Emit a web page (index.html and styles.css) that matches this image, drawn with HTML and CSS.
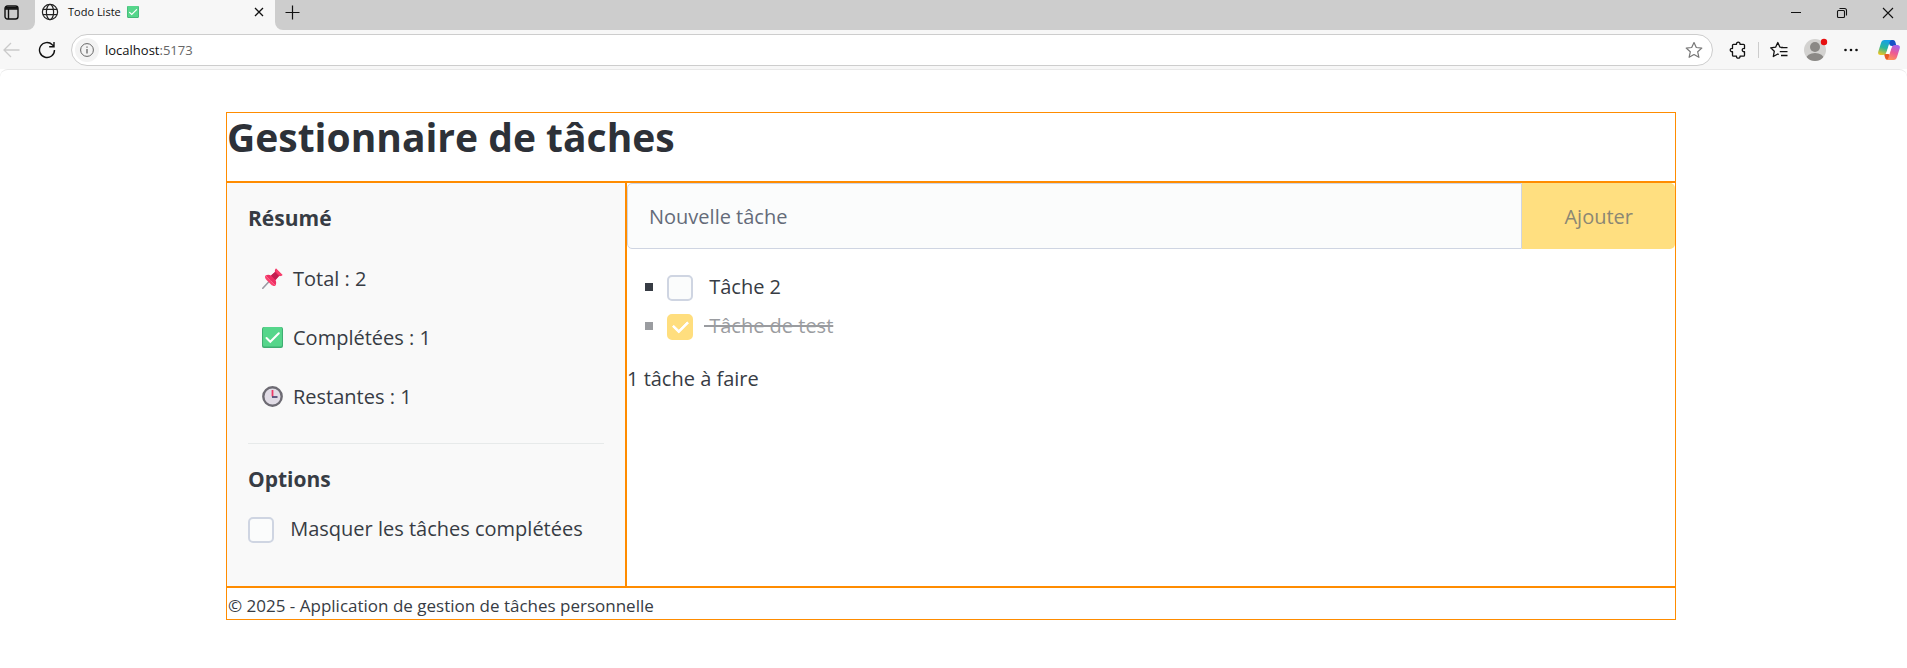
FILE: index.html
```html
<!DOCTYPE html>
<html lang="fr">
<head>
<meta charset="utf-8">
<meta name="viewport" content="width=device-width, initial-scale=1">
<title>Todo Liste ✅</title>
<link rel="stylesheet" href="styles.css">
</head>
<body>
<svg class="defs" width="0" height="0" aria-hidden="true">
  <defs>
    <symbol id="check-emoji" viewBox="0 0 21 21">
      <rect x="0" y="0" width="21" height="21" rx="2" fill="#3fae72"/>
      <rect x="1" y="0" width="19" height="19.500" rx="1.500" fill="#56d68b"/>
      <path d="M4.500 11l3.800 3.800L16.800 6.300" fill="none" stroke="#fff" stroke-width="2" stroke-linecap="round"/>
    </symbol>
  </defs>
</svg>

<header class="browser">
  <div class="tabs">
    <div class="strip strip-start">
      <button class="icon-btn tab-actions" aria-label="Menu des onglets">
        <svg width="15" height="15" viewBox="0 0 15 15" fill="none" stroke="#111" stroke-width="1.400"><rect x="1" y="1" width="13" height="13" rx="2.500"/><path d="M1 4h13M4.500 4v10"/><path d="M1.500 2.800h12" stroke-width="2"/></svg>
      </button>
    </div>
    <div class="tab">
      <svg width="18" height="18" viewBox="0 0 18 18" fill="none" stroke="#222" stroke-width="1.200"><circle cx="9" cy="9" r="7.600"/><ellipse cx="9" cy="9" rx="3.600" ry="7.600"/><path d="M2 6.300h14M2 11.700h14"/></svg>
      <span class="tab-title">Todo Liste</span>
      <svg class="tab-emoji" width="12" height="12"><use href="#check-emoji"/></svg>
      <button class="icon-btn tab-close" aria-label="Fermer l'onglet">
        <svg width="10" height="10" viewBox="0 0 10 10" stroke="#111" stroke-width="1.300"><path d="M1 1l8 8M9 1l-8 8"/></svg>
      </button>
    </div>
    <div class="strip strip-end">
      <button class="icon-btn new-tab" aria-label="Nouvel onglet">
        <svg width="15" height="15" viewBox="0 0 15 15" stroke="#111" stroke-width="1.200"><path d="M7.500 0.500v14M0.500 7.500h14"/></svg>
      </button>
      <div class="window-controls">
        <button class="icon-btn" aria-label="Réduire"><svg width="12" height="12" viewBox="0 0 12 12" stroke="#111"><path d="M1 5.500h10"/></svg></button>
        <button class="icon-btn" aria-label="Restaurer"><svg width="12" height="12" viewBox="0 0 12 12" fill="none" stroke="#111" stroke-width="1.100"><rect x="1.500" y="3.500" width="7" height="7" rx="1"/><path d="M3.500 1.500h5a2 2 0 0 1 2 2v5"/></svg></button>
        <button class="icon-btn" aria-label="Fermer"><svg width="12" height="12" viewBox="0 0 12 12" stroke="#111" stroke-width="1.100"><path d="M1 1l10 10M11 1L1 11"/></svg></button>
      </div>
    </div>
  </div>

  <div class="toolbar">
    <button class="icon-btn back" aria-label="Retour">
      <svg width="17" height="16" viewBox="0 0 17 16" fill="none" stroke="#cacaca" stroke-width="1.300"><path d="M16.500 8H1M8 1L1 8l7 7"/></svg>
    </button>
    <button class="icon-btn reload" aria-label="Actualiser">
      <svg width="18" height="18" viewBox="0 0 18 18" fill="none" stroke="#111" stroke-width="1.400"><path d="M16.500 9A7.500 7.500 0 1 1 14.300 3.700L16 5.300M16 1v4.800h-4.800"/></svg>
    </button>
    <div class="address">
      <button class="icon-btn site-info" aria-label="Informations sur le site">
        <svg width="14" height="14" viewBox="0 0 14 14" fill="none" stroke="#666"><circle cx="7" cy="7" r="6.400"/><path d="M7 6v4.500M7 3.400v1.400" stroke-width="1.300"/></svg>
      </button>
      <div class="url" role="textbox" aria-label="Adresse"><span class="host">localhost</span>:5173</div>
      <button class="icon-btn" aria-label="Ajouter aux favoris">
        <svg width="18" height="18" viewBox="0 0 18 18" fill="none" stroke="#777" stroke-width="1.200" stroke-linejoin="round"><path d="M9 1.500l2.300 5 5.500.6-4.100 3.700 1.200 5.500L9 13.500l-4.900 2.800 1.200-5.500L1.200 7.100l5.500-.6z"/></svg>
      </button>
    </div>
    <div class="tools">
      <button class="icon-btn" aria-label="Extensions">
        <svg width="18" height="18" viewBox="0 0 18 18" fill="none" stroke="#111" stroke-width="1.300" stroke-linejoin="round"><path d="M4.500 3.300h3C7 0.500 11.500 0.500 11 3.300h3.500q1 0 1 1v3.200c-3-.6-3 3.700 0 3.200v3.500q0 1-1 1H11c.5 2.600-4 2.600-3.500 0h-3q-1 0-1-1v-3.500C.5 11.200.5 7 3.500 7.500V4.300q0-1 1-1z"/></svg>
      </button>
      <span class="separator"></span>
      <button class="icon-btn" aria-label="Favoris">
        <svg width="18" height="18" viewBox="0 0 18 18" fill="none" stroke="#111" stroke-width="1.300" stroke-linejoin="round"><path d="M13 6.500l-3-.3L7.800 1.500l-2.200 4.700-4.900.6 3.600 3.400-1 5.300 4.500-2.500 1 .5M11 6.700h6.500M9.800 10.600h7.700M11 14.500h6.500"/></svg>
      </button>
      <button class="icon-btn" aria-label="Profil">
        <svg width="24" height="26" viewBox="0 0 24 26"><defs><clipPath id="avatar-clip"><circle cx="11" cy="13" r="11"/></clipPath></defs><circle cx="11" cy="13" r="11" fill="#d3d2d0"/><g clip-path="url(#avatar-clip)" fill="#8b8986"><circle cx="11" cy="10" r="5"/><ellipse cx="11" cy="22" rx="9" ry="6"/></g><circle cx="20" cy="5" r="3.200" fill="#e60f0f"/></svg>
      </button>
      <button class="icon-btn" aria-label="Plus d'options">
        <svg width="14" height="4" viewBox="0 0 14 4" fill="#111"><circle cx="1.500" cy="2" r="1.300"/><circle cx="7" cy="2" r="1.300"/><circle cx="12.500" cy="2" r="1.300"/></svg>
      </button>
      <button class="icon-btn copilot" aria-label="Copilot">
        <svg width="22" height="20" viewBox="0 0 22 20">
          <defs>
            <linearGradient id="cp-left" x1="0.500" y1="0" x2="0.200" y2="1"><stop offset="0" stop-color="#14a0e8"/><stop offset=".5" stop-color="#28b69b"/><stop offset="1" stop-color="#f5c61c"/></linearGradient>
            <linearGradient id="cp-right" x1="0.700" y1="0" x2="0.300" y2="1"><stop offset="0" stop-color="#a564ee"/><stop offset=".5" stop-color="#ed5a94"/><stop offset="1" stop-color="#ff9555"/></linearGradient>
          </defs>
          <path d="M11 0h4c1.500 0 2 1 2.500 2.500L18.500 6H14c-2 0-2.500-1-3-3z" fill="#1652c6"/>
          <path d="M5 20h5c-2 0-2.500-1-3-2.500L6 14h4c2 0 2 1 1.500 3L11 20z" fill="#e85a24"/>
          <path d="M6.500 0H14c-1.500 0-2 1-2.500 2.500L8.500 12c-.6 2-1.500 3-3.500 3H2.500C.5 15-.3 13.500.3 11.500L3 3C3.600 1 4.500 0 6.500 0z" fill="url(#cp-left)"/>
          <path d="M15.500 20H8c1.500 0 2-1 2.500-2.500L13.500 8c.6-2 1.500-3 3.500-3h2.500c2 0 2.800 1.500 2.200 3.500L19 17c-.6 2-1.500 3-3.500 3z" fill="url(#cp-right)"/>
          <path d="M11 6h3l-3 8H8z" fill="#fff"/>
        </svg>
      </button>
    </div>
  </div>
</header>

<div class="viewport">
  <div class="container">
    <header class="panel page-header"><h1>Gestionnaire de tâches</h1></header>

    <aside class="panel sidebar">
      <h2>Résumé</h2>
      <ul class="stats">
        <li>
          <svg width="21" height="21" viewBox="0 0 21 21"><path d="M8 12.500L.8 20.200" stroke="#9b9aa3" stroke-width="1.600" stroke-linecap="round"/><path d="M3.500 7.500c2-1 4-.8 5.500 0l4-3.500c-.4-1.200 0-2.500 1-3.500l6.500 6.500c-1 1-2.300 1.400-3.500 1L13.500 12c.8 1.700 1 3.700 0 5.500z" fill="#ee2f63"/><path d="M9 7.500l4-3.500 4 4-3.500 4z" fill="#c21f50"/><path d="M3.500 7.500l10 10c-1 1-3 .5-4.500-1l-4.500-4.500c-1.500-1.500-2-3.500-1-4.500z" fill="#fb416f"/><path d="M14 .5l6.500 6.500c-1.500 1-3 .5-4.300-.8S13 2 14 .5z" fill="#f8406d"/></svg>
          <span>Total : 2</span>
        </li>
        <li>
          <svg width="21" height="21"><use href="#check-emoji"/></svg>
          <span>Complétées : 1</span>
        </li>
        <li>
          <svg width="21" height="21" viewBox="0 0 21 21"><circle cx="10.500" cy="10.500" r="9.200" fill="#e1dce6" stroke="#6d6b73" stroke-width="2.400"/><path d="M10.500 10.500V4" stroke="#ee3a68" stroke-width="1.800"/><path d="M10 11h5.500" stroke="#433b6b" stroke-width="1.600"/></svg>
          <span>Restantes : 1</span>
        </li>
      </ul>
      <hr>
      <h2>Options</h2>
      <div class="check-row">
        <input type="checkbox" id="hide-done"><label for="hide-done">&nbsp;Masquer les tâches complétées</label>
      </div>
    </aside>

    <main class="panel content">
      <form class="add-form">
        <input type="text" placeholder="Nouvelle tâche" aria-label="Nouvelle tâche">
        <button type="submit" disabled>Ajouter</button>
      </form>
      <ul class="tasks">
        <li class="check-row"><input type="checkbox" id="task-2"><label for="task-2">&nbsp;Tâche 2</label></li>
        <li class="check-row done"><input type="checkbox" id="task-1" checked><label for="task-1">&nbsp;Tâche de test</label></li>
      </ul>
      <p class="remaining">1 tâche à faire</p>
    </main>

    <footer class="panel page-footer"><small>© 2025 - Application de gestion de tâches personnelle</small></footer>
  </div>
</div>
</body>
</html>
```

FILE: styles.css
```css
* { box-sizing: border-box; }

body {
  margin: 0;
  background: #fff;
  color: #373c44;
  font-family: "Open Sans", "Noto Sans", sans-serif;
  font-size: 20px;
  line-height: 32px;
}

button, input { font: inherit; }
h1, h2, p, ul { margin: 0; padding: 0; }
ul { list-style: none; }
svg { display: block; flex: none; }
.defs { position: absolute; }

/* Browser frame */
.browser { background: #f7f7f7; font-size: 12px; line-height: 16px; }

.icon-btn {
  display: flex;
  align-items: center;
  justify-content: center;
  flex: none;
  padding: 0;
  border: 0;
  background: none;
}

.tabs { display: flex; height: 30px; }
.strip { display: flex; padding-bottom: 6px; background: #cdcdcd; }
.strip-start { border-bottom-right-radius: 8px; }
.strip-end { flex: 1; border-bottom-left-radius: 8px; }
.tab-actions { width: 35px; padding-right: 13px; }
.tab {
  display: flex;
  align-items: center;
  width: 240px;
  padding: 0 11px 6px 6px;
}
.tab-title { margin-left: 9px; font-size: 11px; color: #111; }
.tab-emoji { margin-left: 6px; }
.tab-close { margin-left: auto; }
.new-tab { width: 35px; }
.window-controls { display: flex; gap: 34px; margin-left: auto; padding: 2px 13px 0 0; }

.toolbar { display: flex; align-items: center; height: 39px; }
.back { margin-left: 3px; }
.reload { margin: 0 15px 0 18px; }
.address {
  display: flex;
  align-items: center;
  flex: 1;
  height: 32px;
  padding: 0 9px 0 3px;
  border: 1px solid #cdcdcd;
  border-radius: 16px;
  background: #fff;
}
.site-info { width: 24px; height: 24px; border-radius: 12px; background: #f3f3f3; }
.url { flex: 1; margin-left: 6px; font-size: 13px; color: #666; }
.host { color: #111; }
.tools { display: flex; align-items: center; gap: 16px; padding: 0 7px 0 16px; }
.tools .copilot { margin-left: 4px; }
.separator { width: 1px; height: 16px; margin: 0 -5px; background: #cdcdcd; }

/* Application */
.viewport {
  padding: 42px 5px 42px 0;
  border-top: 1px solid #e8e8e8;
  border-radius: 8px 8px 0 0;
}
.container {
  display: grid;
  grid-template-columns: 400px 1fr;
  max-width: 1450px;
  margin: 0 auto;
}
.panel { border: 1px solid #ff8c00; }
.page-header, .page-footer { grid-column: 1 / -1; }
.page-header { padding-bottom: 21px; }

h1 { color: #2d3138; font-size: 39px; line-height: 47px; font-weight: 700; }
h2 { font-size: 21px; line-height: 28px; font-weight: 700; }

.sidebar { padding: 21px 21px 41px; background: #f9f9f9; }
.stats { margin-top: 17px; }
.stats li {
  display: flex;
  align-items: center;
  gap: 10px;
  height: 59px;
  padding-left: 14px;
}
hr { height: 1px; margin: 17px 0 21px; border: 0; background: #e7eaea; }

.check-row { display: flex; align-items: center; }
.sidebar .check-row { margin-top: 20px; }
.check-row input {
  appearance: none;
  flex: none;
  width: 26px;
  height: 26px;
  margin: 2px 11px 0 0;
  border: 2px solid #cfd5e2;
  border-radius: 5px;
  background: #fbfcfc;
}
.check-row input:checked {
  display: grid;
  place-items: center;
  border-color: #ffbf00;
  background: #ffbf00;
}
.check-row input:checked::before {
  content: "";
  width: 12px;
  height: 7px;
  margin-bottom: 4px;
  border: solid #fff;
  border-width: 0 0 3px 3px;
  border-radius: 1px;
  transform: rotate(-45deg);
}

.add-form { display: flex; height: 66px; }
.add-form input {
  flex: 1;
  min-width: 0;
  padding: 2px 21px 0;
  border: 1px solid #cfd5e2;
  border-radius: 5px 0 0 5px;
  background: #fbfcfc;
  color: #373c44;
}
.add-form input::placeholder { color: #646b79; opacity: 1; }
.add-form button {
  padding: 2px 42px 0;
  border: 0;
  border-radius: 0 5px 5px 0;
  background: #ffdf80;
  color: #8b8774;
}

.tasks {
  display: grid;
  gap: 7px;
  margin: 22px 0 21px;
  padding-left: 18px;
}
.tasks li::before {
  content: "";
  width: 8px;
  height: 8px;
  margin-right: 14px;
  background: #373c44;
}
.done { opacity: 0.5; }
.done label { text-decoration: line-through; text-decoration-thickness: 2px; }

.page-footer { padding: 4px 0 0 1px; line-height: 27px; }
.page-footer small { display: block; font-size: 17px; }
```
